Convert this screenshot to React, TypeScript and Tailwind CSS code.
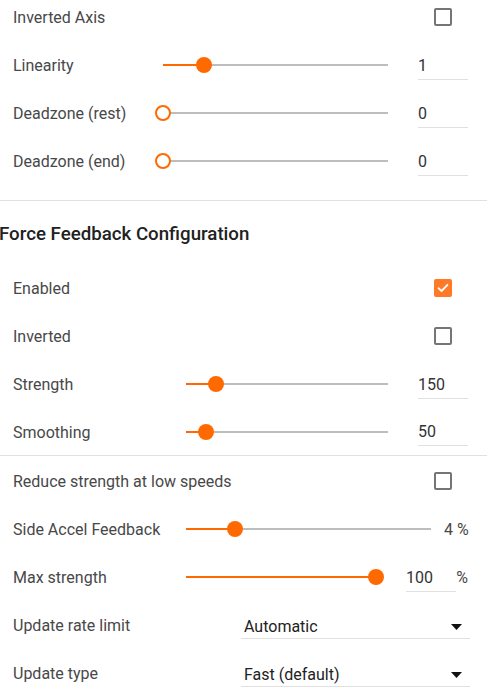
import React from 'react';

const ORANGE = '#ff6a00';

const Slider: React.FC<{ pct: number }> = ({ pct }) => {
  const empty = pct === 0;
  return (
    <div className="relative h-4 flex-1">
      <div className="absolute left-0 right-0 top-[7px] h-[2px] bg-[#bdbdbd]" />
      <div className="absolute left-0 top-[7px] h-[2px] bg-[#ff6a00]" style={{ width: `${pct}%` }} />
      {empty ? (
        <div className="absolute top-0 -ml-2 h-4 w-4 rounded-full border-2 border-[#ff6a00] bg-white" style={{ left: `${pct}%` }} />
      ) : (
        <div className="absolute top-0 -ml-2 h-4 w-4 rounded-full bg-[#ff6a00]" style={{ left: `${pct}%`, backgroundColor: ORANGE }} />
      )}
    </div>
  );
};

const NumInput: React.FC<{ value: string; className?: string }> = ({ value, className = '' }) => (
  <div className={`flex h-[29px] w-[50px] shrink-0 items-center border-b border-[#e0e0e0] pt-[2px] text-[16px] text-[#333] ${className}`}>
    {value}
  </div>
);

const Check: React.FC<{ checked?: boolean }> = ({ checked }) => (
  <div className="flex w-[50px] justify-center">
    {checked ? (
      <div className="flex h-[18px] w-[18px] items-center justify-center rounded-[2px] bg-[#ff7a27]">
        <svg width="12" height="10" viewBox="0 0 12 10" fill="none">
          <path d="M1.5 5.2 L4.5 8 L10.5 1.8" stroke="#fff" strokeWidth="1.8" strokeLinecap="round" strokeLinejoin="round" />
        </svg>
      </div>
    ) : (
      <div className="h-[18px] w-[18px] rounded-[2px] border-2 border-[#757575]" />
    )}
  </div>
);

const Row: React.FC<{ label: string; labelW?: string; children?: React.ReactNode; className?: string }> = ({ label, labelW = '', children, className = '' }) => (
  <div className={`flex h-12 items-center pl-[13px] pr-[19px] ${className}`}>
    <div className={`shrink-0 pt-[2px] text-[16px] text-[#484848] ${labelW}`}>{label}</div>
    <div className="flex flex-1 items-center justify-end">{children}</div>
  </div>
);

const Select: React.FC<{ value: string }> = ({ value }) => (
  <div className="mr-[-2px] flex h-[28px] w-[229px] items-center justify-between border-b border-[#e0e0e0] pl-[3px] pr-[8px] pt-[5px] text-[16px] text-[#222]">
    <span>{value}</span>
    <svg width="11" height="6" viewBox="0 0 11 6">
      <path d="M0 0 L11 0 L5.5 6 Z" fill="#111" />
    </svg>
  </div>
);

export default function App() {
  return (
    <div className="h-[698px] w-[487px] overflow-hidden bg-white" style={{ fontFamily: 'Roboto, "Noto Sans", sans-serif' }}>
      <div className="-mt-[7px]">
        <Row label="Inverted Axis">
          <Check />
        </Row>
        <Row label="Linearity" labelW="w-[150px]">
          <Slider pct={18.2} />
          <NumInput value="1" className="ml-[30px]" />
        </Row>
        <Row label="Deadzone (rest)" labelW="w-[150px]">
          <Slider pct={0} />
          <NumInput value="0" className="ml-[30px]" />
        </Row>
        <Row label="Deadzone (end)" labelW="w-[150px]">
          <Slider pct={0} />
          <NumInput value="0" className="ml-[30px]" />
        </Row>
      </div>

      <div className="mt-[15px] border-t border-[#e0e0e0]" />

      <div className="flex h-[63px] items-center pt-[3px] -ml-[1px]">
        <h2 className="text-[18.7px] font-medium text-[#212121]">Force Feedback Configuration</h2>
      </div>

      <Row label="Enabled">
        <Check checked />
      </Row>
      <Row label="Inverted">
        <Check />
      </Row>
      <Row label="Strength" labelW="w-[173px]">
        <Slider pct={14.9} />
        <NumInput value="150" className="ml-[30px]" />
      </Row>
      <Row label="Smoothing" labelW="w-[173px]" className="h-[47px]">
        <Slider pct={9.9} />
        <NumInput value="50" className="ml-[30px]" />
      </Row>

      <div className="mb-[1px] border-t border-[#e0e0e0]" />

      <Row label="Reduce strength at low speeds">
        <Check />
      </Row>
      <Row label="Side Accel Feedback" labelW="w-[173px]">
        <Slider pct={19.9} />
        <span className="ml-[13px] w-[24px] shrink-0 whitespace-nowrap pt-[2px] text-right text-[16px] text-[#484848]">4 %</span>
      </Row>
      <Row label="Max strength" labelW="w-[173px]">
        <div className="flex w-[190px]">
          <Slider pct={100} />
        </div>
        <NumInput value="100" className="ml-[30px]" />
        <span className="ml-auto pt-[2px] text-[16px] text-[#484848]">%</span>
      </Row>
      <Row label="Update rate limit">
        <Select value="Automatic" />
      </Row>
      <Row label="Update type">
        <Select value="Fast (default)" />
      </Row>
    </div>
  );
}
